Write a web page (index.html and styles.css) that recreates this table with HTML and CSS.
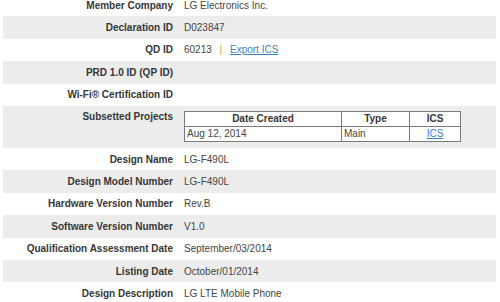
FILE: index.html
```html
<!DOCTYPE html>
<html>
<head>
<meta charset="utf-8">
<link rel="stylesheet" href="styles.css">
</head>
<body>
<div class="details">
  <div class="row"><div class="label">Member Company</div><div class="value">LG Electronics Inc.</div></div>
  <div class="row alt"><div class="label">Declaration ID</div><div class="value">D023847</div></div>
  <div class="row"><div class="label">QD ID</div><div class="value">60213 <span class="sep">|</span> <a href="#">Export ICS</a></div></div>
  <div class="row alt"><div class="label">PRD 1.0 ID (QP ID)</div><div class="value"></div></div>
  <div class="row"><div class="label">Wi-Fi® Certification ID</div><div class="value"></div></div>
  <div class="row alt tall">
    <div class="label">Subsetted Projects</div>
    <div class="value">
      <table class="projects">
        <thead>
          <tr><th class="c-date">Date Created</th><th class="c-type">Type</th><th class="c-ics">ICS</th></tr>
        </thead>
        <tbody>
          <tr><td>Aug 12, 2014</td><td>Main</td><td class="center"><a href="#">ICS</a></td></tr>
        </tbody>
      </table>
    </div>
  </div>
  <div class="row"><div class="label">Design Name</div><div class="value">LG-F490L</div></div>
  <div class="row alt"><div class="label">Design Model Number</div><div class="value">LG-F490L</div></div>
  <div class="row"><div class="label">Hardware Version Number</div><div class="value">Rev.B</div></div>
  <div class="row alt"><div class="label">Software Version Number</div><div class="value">V1.0</div></div>
  <div class="row"><div class="label">Qualification Assessment Date</div><div class="value">September/03/2014</div></div>
  <div class="row alt"><div class="label">Listing Date</div><div class="value">October/01/2014</div></div>
  <div class="row"><div class="label">Design Description</div><div class="value">LG LTE Mobile Phone</div></div>
</div>
</body>
</html>
```

FILE: styles.css
```css
html, body {
  margin: 0;
  padding: 0;
  background: #ffffff;
}

body {
  font-family: "Liberation Sans", Arial, sans-serif;
  font-size: 10px;
  color: #454545;
  overflow: hidden;
}

.details {
  margin: -6px 4px 0 3px;
  width: 493px;
}

.row {
  display: grid;
  grid-template-columns: 177px 1fr;
  height: 22.4px;
  align-items: center;
}

.row.alt {
  background: #ececec;
}

.row.tall {
  height: 42px;
  align-items: start;
}

.label {
  text-align: right;
  padding-right: 7px;
  font-weight: bold;
  color: #363636;
  white-space: nowrap;
}

.value {
  padding-left: 4px;
  white-space: nowrap;
}

.row.tall .label {
  padding-top: 5px;
}

.row.tall .value {
  padding-top: 5px;
}

a {
  color: #3b7fbf;
  text-decoration: underline;
}

.sep {
  color: #c9a24a;
  margin: 0 5px;
}

.projects {
  border-collapse: collapse;
  width: 277px;
  background: #ffffff;
  border: 1px solid #6b6b6b;
}

.projects th,
.projects td {
  border: 1px solid #7a7a7a;
  height: 14px;
  padding: 0 2px;
  line-height: 14px;
}

.projects th {
  font-weight: bold;
  text-align: center;
  color: #363636;
}

.projects td {
  text-align: left;
  color: #454545;
}

.projects td.center {
  text-align: center;
}

.c-date { width: 152px; }
.c-type { width: 63px; }
.c-ics { width: 46px; }
```
